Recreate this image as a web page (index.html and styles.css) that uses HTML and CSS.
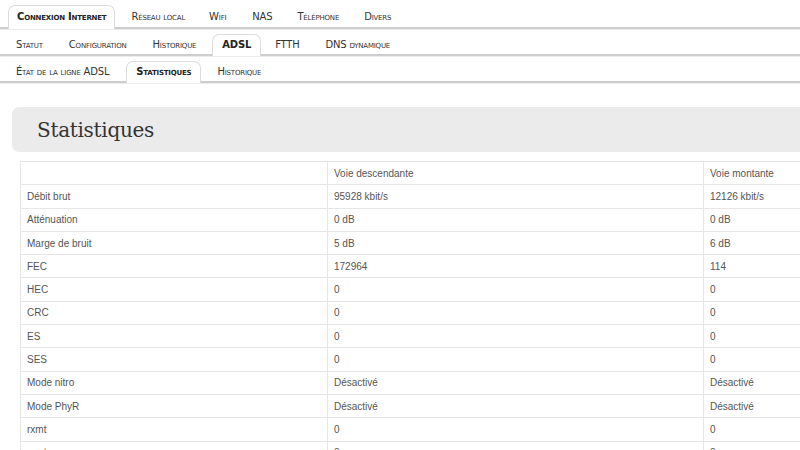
FILE: index.html
```html
<!DOCTYPE html>
<html lang="fr">
<head>
<meta charset="utf-8">
<title>Statistiques ADSL</title>
<link rel="stylesheet" href="styles.css">
</head>
<body>
<div class="page">
  <nav class="tabs tabs-1">
    <a class="tab active t1a">Connexion Internet</a>
    <a class="tab t1b">Réseau local</a>
    <a class="tab t1c">Wifi</a>
    <a class="tab t1d">NAS</a>
    <a class="tab t1e">Téléphone</a>
    <a class="tab t1f">Divers</a>
  </nav>
  <nav class="tabs tabs-2">
    <a class="tab t2a">Statut</a>
    <a class="tab t2b">Configuration</a>
    <a class="tab t2c">Historique</a>
    <a class="tab active t2d">ADSL</a>
    <a class="tab t2e">FTTH</a>
    <a class="tab t2f">DNS dynamique</a>
  </nav>
  <nav class="tabs tabs-3">
    <a class="tab t3a">État de la ligne ADSL</a>
    <a class="tab active t3b">Statistiques</a>
    <a class="tab t3c">Historique</a>
  </nav>

  <section class="panel">
    <h1 class="panel-title">Statistiques</h1>
  </section>

  <table class="stats">
    <colgroup>
      <col class="c1"><col class="c2"><col class="c3">
    </colgroup>
    <thead>
      <tr><th></th><th>Voie descendante</th><th>Voie montante</th></tr>
    </thead>
    <tbody>
      <tr><td>Débit brut</td><td>95928 kbit/s</td><td>12126 kbit/s</td></tr>
      <tr><td>Atténuation</td><td>0 dB</td><td>0 dB</td></tr>
      <tr><td>Marge de bruit</td><td>5 dB</td><td>6 dB</td></tr>
      <tr><td>FEC</td><td>172964</td><td>114</td></tr>
      <tr><td>HEC</td><td>0</td><td>0</td></tr>
      <tr><td>CRC</td><td>0</td><td>0</td></tr>
      <tr><td>ES</td><td>0</td><td>0</td></tr>
      <tr><td>SES</td><td>0</td><td>0</td></tr>
      <tr><td>Mode nitro</td><td>Désactivé</td><td>Désactivé</td></tr>
      <tr><td>Mode PhyR</td><td>Désactivé</td><td>Désactivé</td></tr>
      <tr><td>rxmt</td><td>0</td><td>0</td></tr>
      <tr><td>rxmt_corr</td><td>0</td><td>0</td></tr>
    </tbody>
  </table>
</div>
</body>
</html>
```
FILE: styles.css
```css
html, body {
  margin: 0;
  padding: 0;
  background: #ffffff;
  overflow: hidden;
}
.page {
  width: 800px;
  height: 450px;
  overflow: hidden;
  font-family: "DejaVu Sans", Verdana, sans-serif;
}
.tabs {
  display: flex;
  align-items: flex-end;
  height: 26px;
  border-bottom: 2px solid #cdcdcd;
  box-shadow: 0 1px 0 #ececec;
  padding-left: 8px;
}
.tabs-1 { height: 27px; }
.tabs-2 { height: 25px; }
.tabs-3 { height: 25px; }
.tab {
  display: block;
  font-size: 10px;
  font-variant: small-caps;
  color: #333;
  line-height: 20px;
  height: 20px;
  padding: 0 9px;
  margin-bottom: -1px;
  white-space: nowrap;
  letter-spacing: -0.2px;
}
.tab.active {
  font-weight: bold;
  color: #222;
  background: #fff;
  border: 1px solid #dcdcdc;
  border-bottom: none;
  border-radius: 7px 7px 0 0;
  height: 21px;
  margin-bottom: -2px;
}
.tabs-1 .tab { height: 22px; line-height: 22px; }
.tabs-1 .tab.active { height: 23px; }

/* spacing to follow the reference */
.t1a { padding: 0 8px; }
.t1b { margin-left: 7px; }
.t1c { margin-left: 6px; }
.t1d { margin-left: 8px; }
.t1e { margin-left: 7px; }
.t1f { margin-left: 7px; }
.t2a { padding-left: 8px; }
.t2b { margin-left: 8px; }
.t2c { margin-left: 8px; }
.t2d { margin-left: 7px; }
.t2e { margin-left: 5px; }
.t2f { margin-left: 8px; }
.t3a { padding-left: 8px; }
.t3b { margin-left: 8px; }
.t3c { margin-left: 7px; }

.panel {
  margin: 24px 0 0 12px;
  height: 45px;
  background: #ebebeb;
  border-radius: 7px 0 0 7px;
  display: flex;
  align-items: center;
  padding-left: 25px;
}
.panel-title {
  margin: 0;
  font-family: "DejaVu Serif", Georgia, serif;
  font-weight: normal;
  font-size: 20px;
  color: #333;
  letter-spacing: -0.3px;
}

.stats {
  margin: 9px 0 0 20px;
  border-collapse: collapse;
  table-layout: fixed;
  width: 990px;
  font-family: "Liberation Sans", Arial, sans-serif;
  font-size: 10px;
  color: #555;
}
.c1 { width: 307px; }
.c2 { width: 376px; }
.c3 { width: 307px; }
.stats th, .stats td {
  border: 1px solid #e6e6e6;
  text-align: left;
  font-weight: normal;
  padding: 0 6px;
  height: 22.3px;
}
```
